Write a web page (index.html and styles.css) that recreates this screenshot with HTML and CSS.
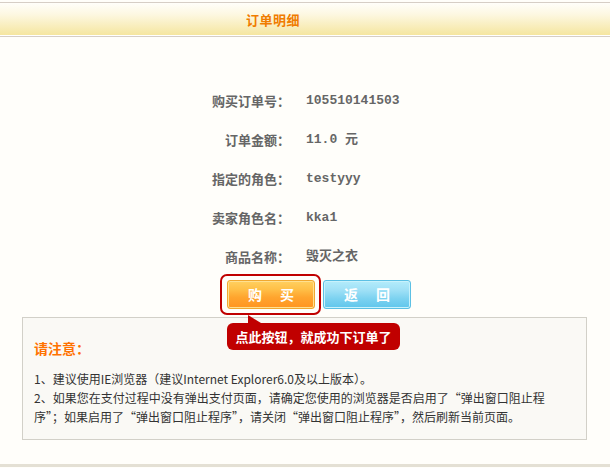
FILE: index.html
```html
<!DOCTYPE html>
<html lang="zh-CN">
<head>
<meta charset="utf-8">
<title>订单明细</title>
<link rel="stylesheet" href="styles.css">
</head>
<body>
<div class="header"><h1 class="title">订单明细</h1></div>
<div class="info">
  <div class="row"><span class="label">购买订单号：</span><span class="value">105510141503</span></div>
  <div class="row"><span class="label">订单金额：</span><span class="value">11.0 元</span></div>
  <div class="row"><span class="label">指定的角色：</span><span class="value">testyyy</span></div>
  <div class="row"><span class="label">卖家角色名：</span><span class="value">kka1</span></div>
  <div class="row"><span class="label">商品名称：</span><span class="value">毁灭之衣</span></div>
</div>
<div class="actions">
  <div class="buy-wrap">
    <button class="btn btn-buy">购买</button>
    <div class="tip">点此按钮，就成功下订单了</div>
  </div>
  <button class="btn btn-back">返回</button>
</div>
<div class="notice">
  <h2 class="notice-title">请注意：</h2>
  <p class="notice-text">1、建议使用IE浏览器（建议Internet Explorer6.0及以上版本）。<br>2、如果您在支付过程中没有弹出支付页面，请确定您使用的浏览器是否启用了“弹出窗口阻止程<br>序”；如果启用了“弹出窗口阻止程序”，请关闭“弹出窗口阻止程序”，然后刷新当前页面。</p>
</div>
<div class="footer"></div>
</body>
</html>
```
FILE: styles.css
```css
html, body {
  margin: 0;
  padding: 0;
  background: #fffefa;
  font-family: "Noto Sans CJK SC", "Liberation Sans", sans-serif;
  color: #333;
}
.header {
  margin-top: 2px;
  border-top: 1px solid #d6cec6;
  border-bottom: 1px solid #ffffff;
  box-shadow: 0 1px 0 #d6cec6;
  height: 32px;
  background: linear-gradient(#fffefa 0%, #fdf8e2 35%, #f5e6a0 100%);
  display: flex;
  align-items: center;
  justify-content: center;
  padding-right: 64px;
}
.title {
  margin: 0;
  font-size: 13px;
  font-weight: bold;
  color: #f07c00;
  letter-spacing: 0.5px;
}
.info {
  padding-top: 45px;
}
.row {
  display: grid;
  grid-template-columns: 290px 1fr;
  column-gap: 16px;
  height: 39px;
  line-height: 39px;
  font-size: 13px;
  font-weight: bold;
  color: #666;
}
.label {
  text-align: right;
}
.value {
  font-family: "Liberation Mono", "Noto Sans CJK SC", monospace;
}
.actions {
  margin-top: -2px;
  padding-left: 220px;
  display: flex;
  align-items: center;
  gap: 2px;
}
.buy-wrap {
  position: relative;
  border: 2px solid #c00000;
  border-radius: 7px;
  padding: 4px 4px 4px 5px;
  display: flex;
}
.btn {
  width: 88px;
  height: 29px;
  border-radius: 3px;
  font-family: "Noto Sans CJK SC", sans-serif;
  font-size: 14px;
  font-weight: bold;
  color: #fff;
  letter-spacing: 18px;
  padding: 0 0 0 18px;
  line-height: 27px;
  cursor: pointer;
}
.btn-buy {
  border: 1px solid #f0a830;
  background: linear-gradient(#ffd060 0%, #ffc048 30%, #ffa52e 60%, #ff9420 100%);
  box-shadow: inset 0 0 0 1px #ffe090;
}
.btn-back {
  border: 1px solid #5cc0e4;
  background: linear-gradient(#b4ecfb 0%, #9ee0f6 35%, #7cd2f0 65%, #60c6ec 100%);
  box-shadow: inset 0 0 0 1px #c8f2fc;
}
.tip {
  position: absolute;
  left: 5px;
  top: 47px;
  width: 173px;
  height: 27px;
  line-height: 27px;
  background: #c00000;
  border-radius: 6px;
  color: #fff;
  font-size: 13px;
  font-weight: bold;
  text-align: center;
  white-space: nowrap;
  z-index: 2;
}
.tip::before {
  content: "";
  position: absolute;
  left: 21px;
  top: -8px;
  border-bottom: 8px solid #c00000;
  border-right: 13px solid transparent;
}
.notice {
  margin: 2px 23px 0 22px;
  border: 1px solid #d2d0c8;
  background: #faf9f5;
  padding: 20px 11px 13px 11px;
  height: 88px;
}
.notice-title {
  margin: 0;
  font-size: 14px;
  line-height: 20px;
  font-weight: bold;
  color: #ff7200;
}
.notice-text {
  margin: 11px 0 0 0;
  font-size: 12px;
  line-height: 19px;
  color: #333;
  white-space: nowrap;
}
.footer {
  margin-top: 24px;
  height: 3px;
  background: #e4e0d4;
}
```
